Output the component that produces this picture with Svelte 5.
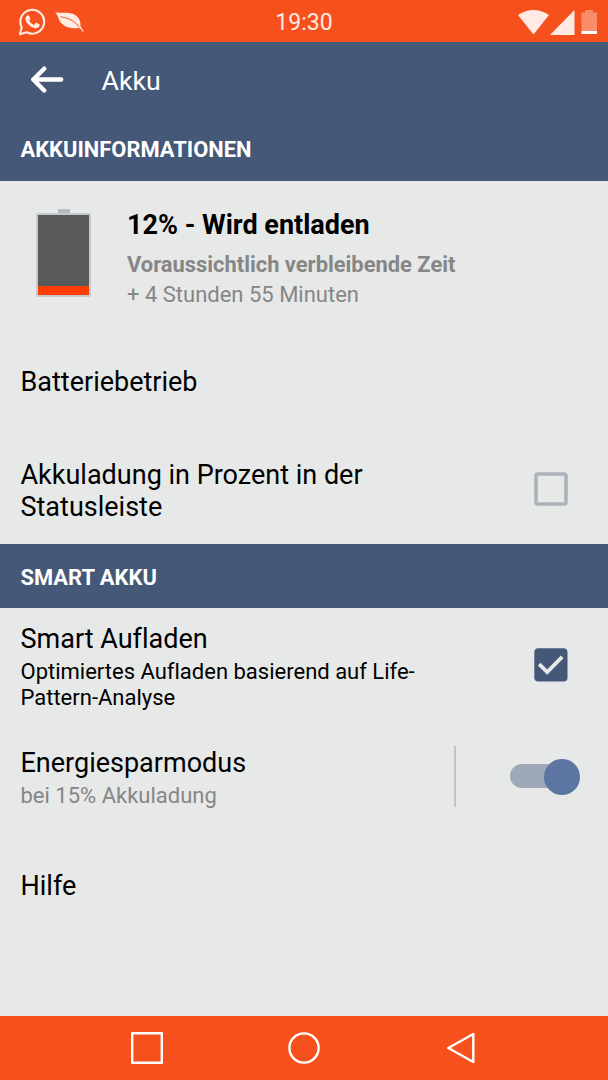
<script lang="ts">
  let percentInStatus = $state(false);
  let smartCharging = $state(true);
  let powerSaver = $state(true);
  const level = 12;
</script>

{#snippet checkbox(checked: boolean)}
  <svg width="34" height="34" viewBox="0 0 34 34">
    {#if checked}
      <rect x="0.3" y="0.3" width="33.2" height="33.2" rx="4" fill="#455878" />
      <path d="M5.2 16.2l8 7.8L28.2 8.8" fill="none" stroke="#e7e9e8" stroke-width="3.8" />
    {:else}
      <rect x="2" y="2" width="30" height="30" rx="2" fill="none" stroke="#acb2ba" stroke-width="3.6" />
    {/if}
  </svg>
{/snippet}

<div class="screen">
  <div class="status-bar">
    <div class="notifications">
      <svg width="28" height="28" viewBox="0 0 28 28">
        <path d="M3.7 19.2A11.9 11.9 0 1 1 8.800 24.3L2 26.200z" fill="none" stroke="#ffeae4" stroke-width="2.100" stroke-linejoin="round" />
        <path d="M9.200 7.500c.6-.5 1.500-.5 1.900.2l1.300 2.800c.2.600-.9 1.600-1.200 2 .9 2 2.500 3.500 4.700 4.400l1.600-1.800c.4-.4.8-.3 1.200-.1l2.600 1.300c.6.300.5.9.3 1.500-.6 1.800-2.600 2.700-4.300 2.400-5-1-9.300-5-9.900-8.900-.2-1.500.6-3 1.800-3.800z" fill="#ffeae4" />
      </svg>
      <svg width="30" height="24" viewBox="0 0 30 24">
        <path d="M0 2C7 4 15 1 21 5.400c4 3.300 4.800 7 4.500 11 1.500 1.600 2.300 3.200 3 5.400l-.6.500c-1-2-2.200-3.600-3.800-4.600-5 1.200-12 .9-17-3.700C3 10 3.500 5.500 0 2z" fill="#ffeae4" />
        <path d="M5.500 6.800c5 .8 13 2.500 18.500 10" fill="none" stroke="#f6511d" stroke-width="1" />
      </svg>
    </div>
    <span class="clock">19:30</span>
    <div class="signals">
      <svg width="80" height="26" viewBox="0 0 80 26">
        <path d="M0 6Q15.500-4 31 6L15.500 25.500z" fill="#ffeae4" />
        <path d="M32 26L56.500 1v25z" fill="#ffeae4" />
        <path d="M63.500 3.500H67V1h8v2.500h4v19H63.500z" fill="#fb8c6b" />
        <path d="M63.500 22H79v3H63.500z" fill="#fff" />
      </svg>
    </div>
  </div>

  <header class="app-bar">
    <button class="back" aria-label="Zurück">
      <svg width="34" height="28" viewBox="0 0 34 28">
        <path d="M14.200 2.700L3.300 13.500l10.900 11M3.800 13.500H31.200" fill="none" stroke="#fff" stroke-width="4.400" stroke-linecap="round" stroke-linejoin="round" />
      </svg>
    </button>
    <h1>Akku</h1>
  </header>

  <h2 class="section-title">AKKUINFORMATIONEN</h2>

  <div class="info">
    <div class="battery">
      <div class="cap"></div>
      <div class="cell">
        <div class="charge" style="height: {level - 1}%"></div>
      </div>
    </div>
    <div class="info-text">
      <div class="state">{level}% - Wird entladen</div>
      <div class="remaining-label">Voraussichtlich verbleibende Zeit</div>
      <div class="remaining">+ 4 Stunden 55 Minuten</div>
    </div>
  </div>

  <div class="row usage">
    <div class="title">Batteriebetrieb</div>
  </div>

  <div class="row percent">
    <div class="title wrap">Akkuladung in Prozent in der Statusleiste</div>
    <button class="check" role="checkbox" aria-label="Akkuladung" aria-checked={percentInStatus} onclick={() => (percentInStatus = !percentInStatus)}>
      {@render checkbox(percentInStatus)}
    </button>
  </div>

  <h2 class="section-title smart">SMART AKKU</h2>

  <div class="row charging">
    <div class="text">
      <div class="title">Smart Aufladen</div>
      <div class="desc">Optimiertes Aufladen basierend auf Life-<br />Pattern-Analyse</div>
    </div>
    <button class="check" role="checkbox" aria-label="Smart Aufladen" aria-checked={smartCharging} onclick={() => (smartCharging = !smartCharging)}>
      {@render checkbox(smartCharging)}
    </button>
  </div>

  <div class="row saver">
    <div class="text">
      <div class="title">Energiesparmodus</div>
      <div class="desc muted">bei 15% Akkuladung</div>
    </div>
    <div class="divider"></div>
    <button class="switch" class:on={powerSaver} role="switch" aria-label="Energiesparmodus" aria-checked={powerSaver} onclick={() => (powerSaver = !powerSaver)}>
      <span class="thumb"></span>
    </button>
  </div>

  <div class="row help">
    <div class="title">Hilfe</div>
  </div>

  <nav class="nav-bar">
    <svg width="32" height="32" viewBox="0 0 32 32"><rect x="1.200" y="1.200" width="29.600" height="29.600" /></svg>
    <svg width="32" height="32" viewBox="0 0 32 32"><circle cx="16" cy="16" r="14.600" /></svg>
    <svg width="32" height="32" viewBox="0 0 32 32"><path d="M28.300 2v28L3.300 16z" /></svg>
  </nav>
</div>

<style>
  :global(body) {
    background: #e7e9e8;
  }

  .screen {
    width: 608px;
    height: 1080px;
    display: flex;
    flex-direction: column;
    background: #e7e9e8;
    font-family: Roboto, "Liberation Sans", sans-serif;
    font-variant-ligatures: none;
    color: #000;
    overflow: hidden;
  }

  button {
    background: none;
    border: 0;
    padding: 0;
  }

  svg {
    display: block;
  }

  h1,
  h2 {
    margin: 0;
  }

  .status-bar {
    height: 42px;
    flex: none;
    display: grid;
    grid-template-columns: 1fr auto 1fr;
    align-items: center;
    background: #f6511d;
  }

  .notifications {
    display: flex;
    align-items: center;
    gap: 9px;
    padding-left: 18px;
  }

  .clock {
    font-size: 23px;
    line-height: 42px;
    padding-top: 2px;
    color: #ffeae4;
  }

  .signals {
    display: flex;
    justify-content: flex-end;
    padding-right: 10px;
  }

  .app-bar {
    height: 76px;
    flex: none;
    display: flex;
    align-items: center;
    gap: 37.5px;
    padding-left: 30px;
    background: #455878;
  }

  h1 {
    padding-top: 2px;
    font-size: 26.7px;
    font-weight: 400;
    line-height: 32px;
    color: #fff;
  }

  .section-title {
    height: 63px;
    flex: none;
    padding-left: 20.5px;
    background: #455878;
    color: #fff;
    font-size: 21.9px;
    font-weight: 700;
    line-height: 63px;
  }

  .smart {
    height: 64px;
    line-height: 67px;
  }

  .info {
    height: 147px;
    flex: none;
    display: flex;
    box-sizing: border-box;
    padding: 27px 0 0 36px;
    gap: 36px;
  }

  .battery {
    width: 55px;
    display: flex;
    flex-direction: column;
    align-items: center;
  }

  .cap {
    width: 12px;
    height: 5px;
    margin-top: 1px;
    background: #b4b8bc;
  }

  .cell {
    width: 51px;
    height: 80px;
    display: flex;
    align-items: flex-end;
    margin-top: -1px;
    border: 2px solid #c5c9cc;
    border-radius: 2px;
    background: #58595b;
  }

  .charge {
    width: 100%;
    background: #ff3d00;
  }

  .state {
    font-size: 27px;
    font-weight: 700;
    line-height: 34px;
  }

  .remaining-label,
  .remaining {
    font-size: 22px;
    line-height: 29px;
    color: #868686;
  }

  .remaining-label {
    margin: 8px 0 1px;
    font-size: 21.9px;
    font-weight: 700;
  }

  .row {
    flex: none;
    display: flex;
    align-items: center;
    justify-content: space-between;
    box-sizing: border-box;
    padding-left: 20.5px;
  }

  .usage {
    height: 109px;
    padding-bottom: 2px;
  }

  .percent {
    height: 107px;
  }

  .percent .check {
    margin-bottom: 3px;
  }

  .charging {
    height: 114px;
  }

  .charging .text {
    padding-top: 4px;
  }

  .saver {
    height: 110px;
    padding-bottom: 2px;
  }

  .saver .text {
    padding-top: 4px;
  }

  .help {
    height: 109px;
    padding-bottom: 2px;
  }

  .title {
    font-size: 27px;
    line-height: 32px;
  }

  .wrap {
    width: 370px;
  }

  .desc {
    margin-top: 4px;
    font-size: 22px;
    line-height: 26px;
  }

  .muted {
    color: #868686;
  }

  .check {
    margin-right: 40px;
  }

  .divider {
    width: 2px;
    height: 61px;
    margin-left: auto;
    background: #c2c4c4;
  }

  .switch {
    width: 60px;
    height: 24px;
    margin: 0 38px 0 54px;
    display: flex;
    align-items: center;
    border-radius: 12px;
    background: #9fa8b7;
  }

  .thumb {
    width: 36px;
    height: 36px;
    flex: none;
    border-radius: 50%;
    background: #acb2ba;
  }

  .on .thumb {
    margin: 1px 0 0 34px;
    background: #5c75a3;
  }

  .nav-bar {
    height: 64px;
    margin-top: auto;
    display: flex;
    align-items: center;
    justify-content: center;
    gap: 125px;
    background: #f6511d;
  }

  .nav-bar svg {
    fill: none;
    stroke: #fff;
    stroke-width: 2.4;
    stroke-linejoin: round;
  }
</style>
